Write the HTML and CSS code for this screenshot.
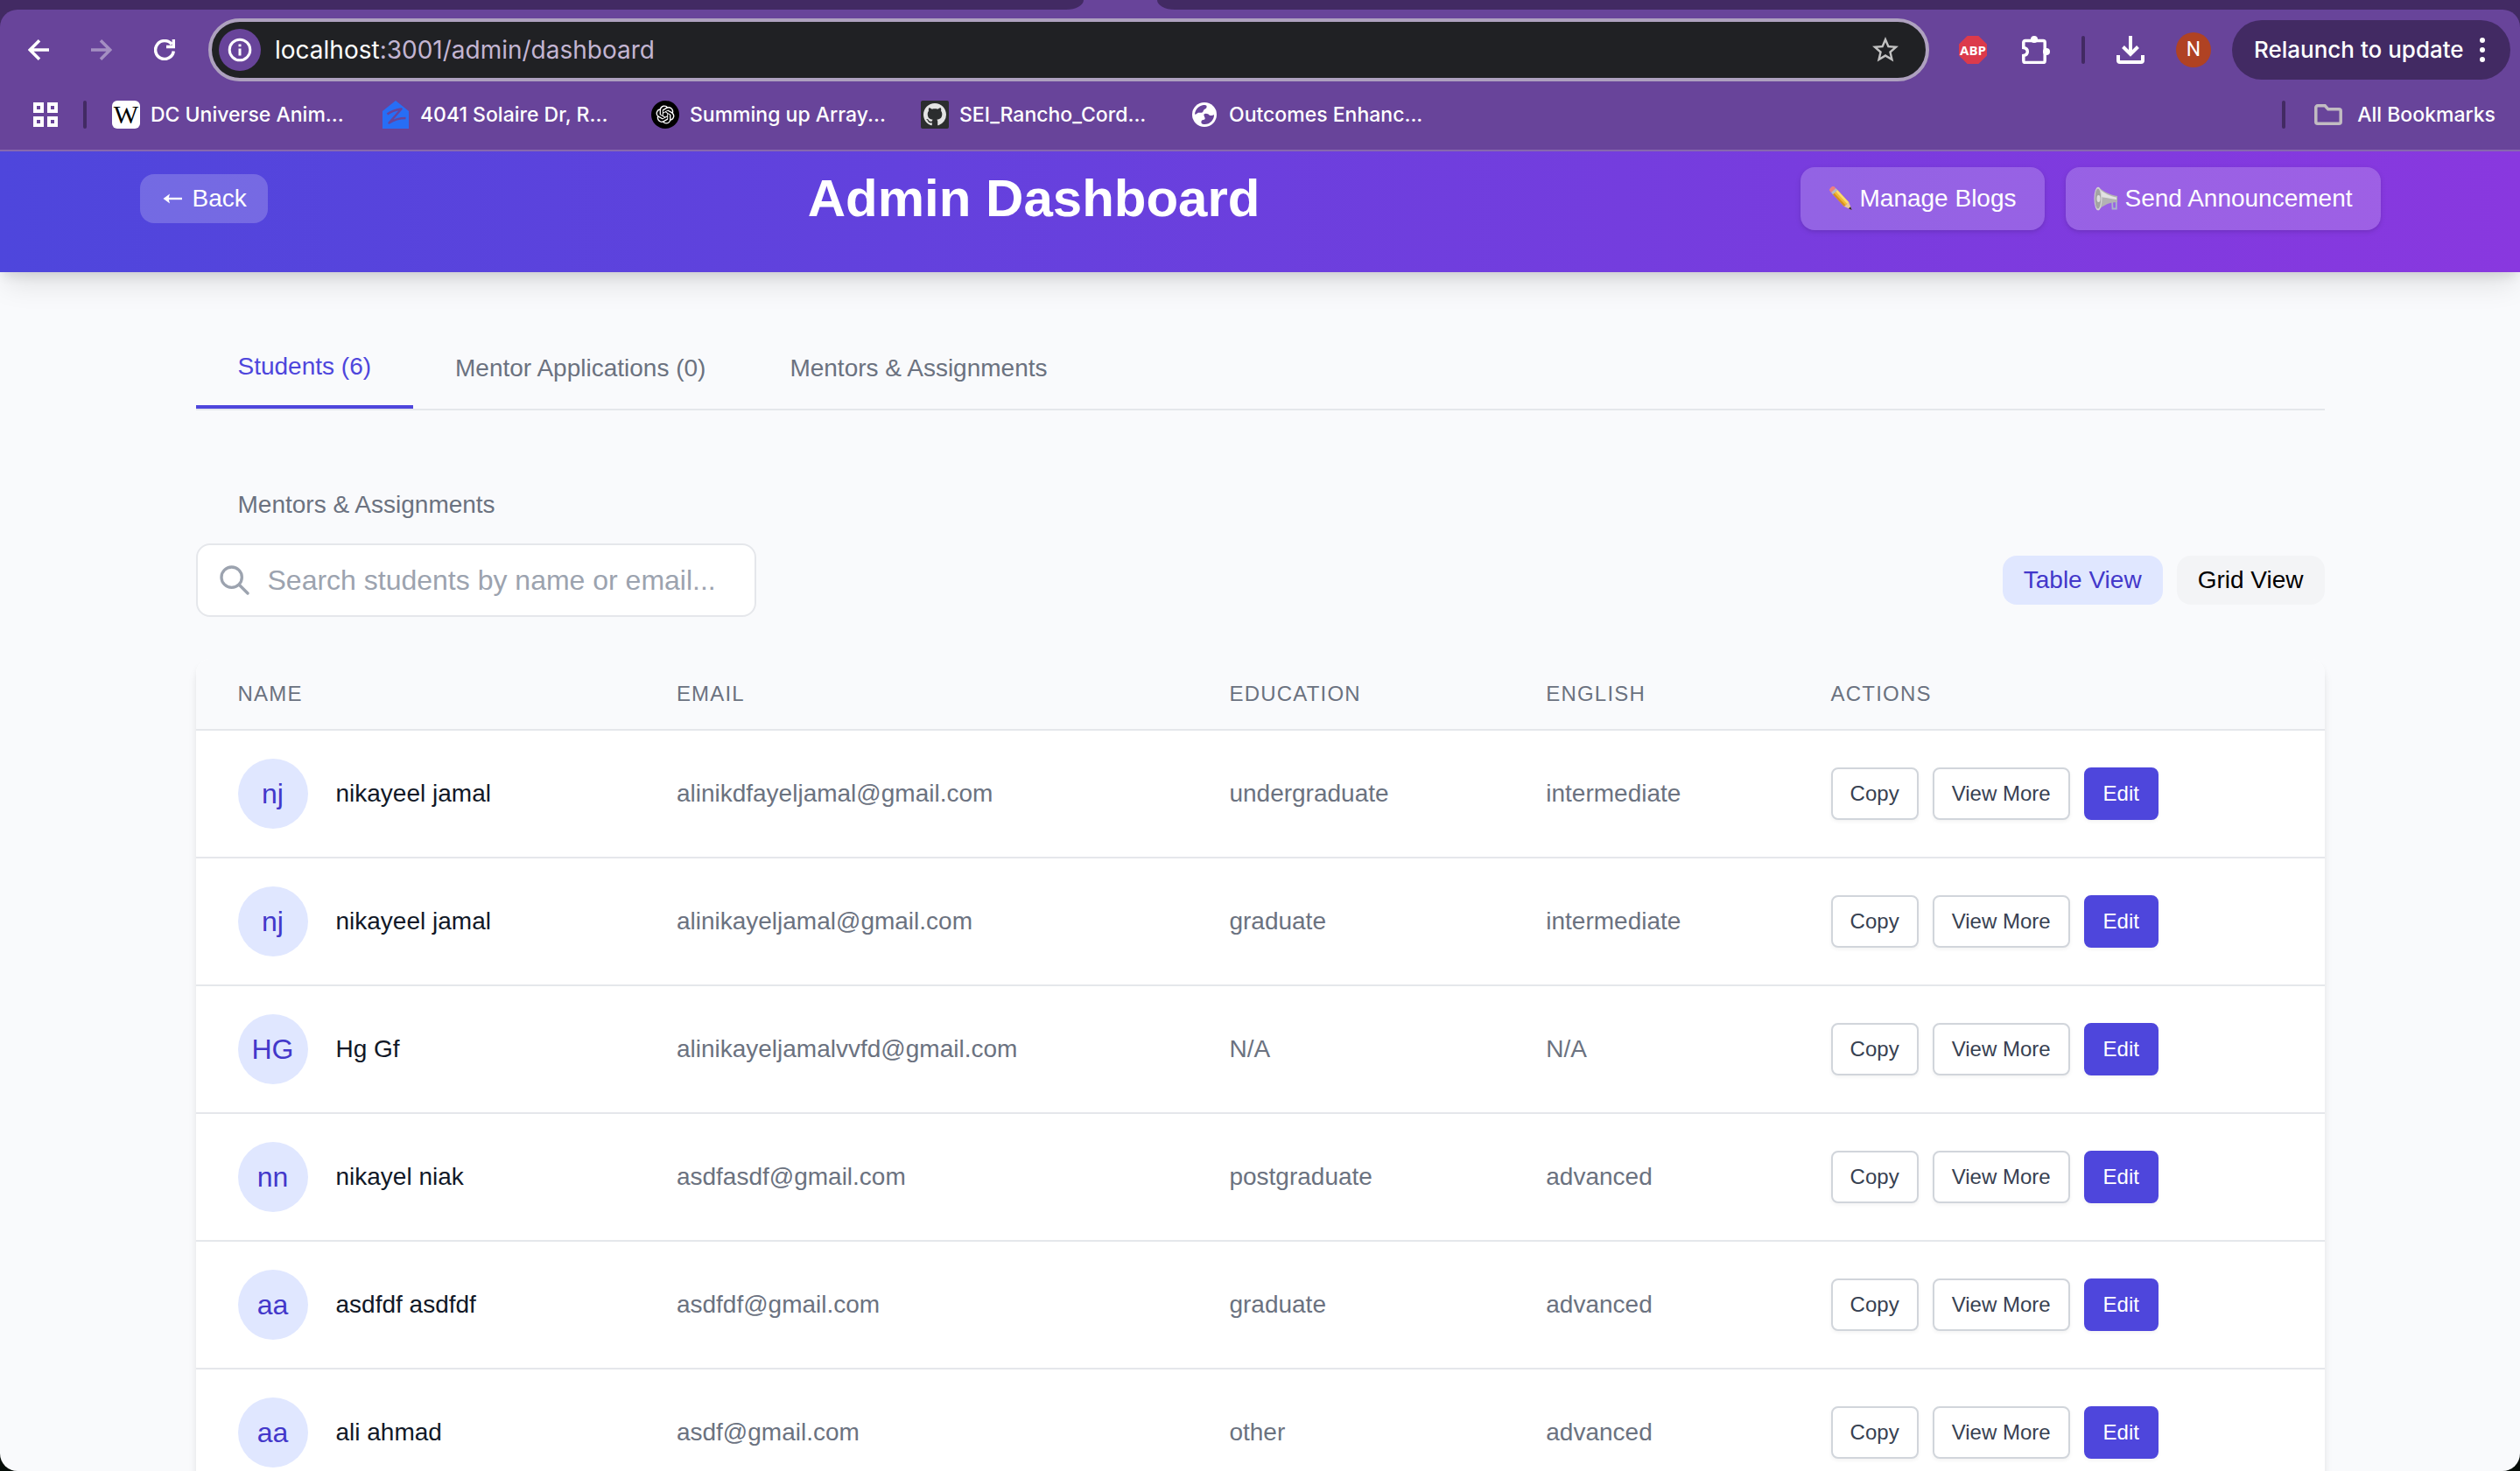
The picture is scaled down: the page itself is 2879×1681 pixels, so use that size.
FILE: index.html
```html
<!DOCTYPE html>
<html lang="en">
<head>
<meta charset="utf-8">
<title>Admin Dashboard</title>
<link rel="stylesheet" href="styles.css">
</head>
<body>
<div class="window">
  <div class="chrome">
    <div class="tab-strip"><div class="tab-strip-left"></div><div class="tab-strip-right"></div></div>
    <div class="toolbar">
      <button class="nav-button" aria-label="Back"><svg width="24" height="24" viewBox="0 0 24 24"><path d="M24 12H3M13 1.3 2.3 12 13 22.7"/></svg></button>
      <button class="nav-button nav-disabled" aria-label="Forward"><svg width="24" height="24" viewBox="0 0 24 24"><path d="M0 12h21M11 1.3 21.7 12 11 22.7"/></svg></button>
      <button class="nav-button" aria-label="Reload"><svg width="24" height="24" viewBox="0 0 24 24"><path d="M22.3 13.5A10.4 10.4 0 1 1 20.2 5.6M22.4 0v8.4H14"/></svg></button>
      <div class="omnibox">
        <button class="site-info" aria-label="Site information"><svg width="28" height="28" viewBox="0 0 28 28"><circle cx="14" cy="14" r="11.8"/><path d="M14 12.5v8M14 7.5v2.8"/></svg></button>
        <span class="url"><b>localhost</b>:3001/admin/dashboard</span>
        <button class="star" aria-label="Bookmark this tab"><svg width="36" height="36" viewBox="0 0 24 24"><path d="M22 9.24l-7.19-.62L12 2 9.19 8.63 2 9.24l5.46 4.73L5.82 21 12 17.27 18.18 21l-1.63-7.03L22 9.24zM12 15.4l-3.76 2.27 1-4.28-3.32-2.88 4.38-.38L12 6.1l1.71 4.04 4.38.38-3.32 2.88 1 4.28L12 15.4z"/></svg></button>
      </div>
      <div class="extensions">
        <button class="abp">ABP</button>
        <button class="icon-button" aria-label="Extensions"><svg width="32" height="32" viewBox="0 0 32 32"><path d="M1.8 13.5v-6a2 2 0 0 1 2-2h20.4a2 2 0 0 1 2 2v21a2 2 0 0 1-2 2H3.8a2 2 0 0 1-2-2v-6c6-1 6-8 0-9z" fill="none" stroke="#fff" stroke-width="3.5"/><circle cx="14" cy="4" r="4" fill="#fff"/><circle cx="28" cy="18" r="4" fill="#fff"/></svg></button>
        <span class="divider"></span>
        <button class="icon-button" aria-label="Downloads"><svg width="32" height="32" viewBox="0 0 32 32" fill="none" stroke="#fff" stroke-width="4"><path d="M16 0v20M7.5 12.5 16 21l8.5-8.5"/><path d="M2 22v6a2 2 0 0 0 2 2h24a2 2 0 0 0 2-2v-6"/></svg></button>
        <button class="profile">N</button>
      </div>
      <button class="relaunch">Relaunch to update<svg width="6" height="28" viewBox="0 0 6 28"><circle cx="3" cy="3" r="3"/><circle cx="3" cy="14" r="3"/><circle cx="3" cy="25" r="3"/></svg></button>
    </div>
    <nav class="bookmarks">
      <button class="apps" aria-label="Apps"><svg width="28" height="28" viewBox="0 0 28 28"><path d="M2 2h8v8H2zM18 2h8v8h-8zM2 18h8v8H2zM18 18h8v8h-8z"/></svg></button>
      <span class="divider"></span>
      <div class="bookmark-list">
        <a class="bookmark" href="#"><span class="wiki">W</span>DC Universe Anim...</a>
        <a class="bookmark" href="#"><svg width="32" height="32" viewBox="0 0 32 32"><path d="M16 0 1 12v20h30V12z" fill="#276ef5"/><path d="M6.5 15.500c5-4 10-5 16-6L8.500 25.500c6-4 12-5.500 19-5.500" fill="none" stroke="#68449a" stroke-width="2.500" stroke-linejoin="round"/></svg>4041 Solaire Dr, R...</a>
        <a class="bookmark" href="#"><svg width="32" height="32" viewBox="0 0 32 32"><circle cx="16" cy="16" r="16"/><path transform="translate(5.500 5.500) scale(.875)" fill="#fff" d="M22.2819 9.8211a5.9847 5.9847 0 0 0-.5157-4.9108 6.0462 6.0462 0 0 0-6.5098-2.9A6.0651 6.0651 0 0 0 4.9807 4.1818a5.9847 5.9847 0 0 0-3.9977 2.9 6.0462 6.0462 0 0 0 .7427 7.0966 5.98 5.98 0 0 0 .511 4.9107 6.051 6.051 0 0 0 6.5146 2.9001A5.9847 5.9847 0 0 0 13.2599 24a6.0557 6.0557 0 0 0 5.7718-4.2058 5.9894 5.9894 0 0 0 3.9977-2.9001 6.0557 6.0557 0 0 0-.7475-7.0729zm-9.022 12.6081a4.4755 4.4755 0 0 1-2.8764-1.0408l.1419-.0804 4.7783-2.7582a.7948.7948 0 0 0 .3927-.6813v-6.7369l2.02 1.1686a.071.071 0 0 1 .038.052v5.5826a4.504 4.504 0 0 1-4.4945 4.4944zm-9.6607-4.1254a4.4708 4.4708 0 0 1-.5346-3.0137l.142.0852 4.783 2.7582a.7712.7712 0 0 0 .7806 0l5.8428-3.3685v2.3324a.0804.0804 0 0 1-.0332.0615L9.74 19.9502a4.4992 4.4992 0 0 1-6.1408-1.6464zM2.3408 7.8956a4.485 4.485 0 0 1 2.3655-1.9728V11.6a.7664.7664 0 0 0 .3879.6765l5.8144 3.3543-2.0201 1.1685a.0757.0757 0 0 1-.071 0l-4.8303-2.7865A4.504 4.504 0 0 1 2.3408 7.872zm16.5963 3.8558L13.1038 8.364 15.1192 7.2a.0757.0757 0 0 1 .071 0l4.8303 2.7913a4.4944 4.4944 0 0 1-.6765 8.1042v-5.6772a.79.79 0 0 0-.407-.667zm2.0107-3.0231l-.142-.0852-4.7735-2.7818a.7759.7759 0 0 0-.7854 0L9.409 9.2297V6.8974a.0662.0662 0 0 1 .0284-.0615l4.8303-2.7866a4.4992 4.4992 0 0 1 6.6802 4.66zM8.3065 12.863l-2.02-1.1638a.0804.0804 0 0 1-.038-.0567V6.0742a4.4992 4.4992 0 0 1 7.3757-3.4537l-.142.0805L8.704 5.459a.7948.7948 0 0 0-.3927.6813zm1.0976-2.3654l2.602-1.4998 2.6069 1.4998v2.9994l-2.5974 1.4997-2.6067-1.4997Z"/></svg>Summing up Array...</a>
        <a class="bookmark" href="#"><svg width="32" height="32" viewBox="0 0 32 32"><rect width="32" height="32" rx="2" fill="#2b2d2e"/><path transform="translate(3 3) scale(1.625)" fill="#e4e4e4" d="M8 0C3.58 0 0 3.58 0 8c0 3.54 2.29 6.53 5.47 7.59.4.07.55-.17.55-.38 0-.19-.01-.82-.01-1.49-2.01.37-2.53-.49-2.69-.94-.09-.23-.48-.94-.82-1.13-.28-.15-.68-.52-.01-.53.63-.01 1.08.58 1.23.82.72 1.21 1.87.87 2.33.66.07-.52.28-.87.51-1.07-1.78-.2-3.64-.89-3.64-3.95 0-.87.31-1.59.82-2.15-.08-.2-.36-1.02.08-2.12 0 0 .67-.21 2.2.82.64-.18 1.32-.27 2-.27s1.36.09 2 .27c1.53-1.04 2.2-.82 2.2-.82.44 1.1.16 1.92.08 2.12.51.56.82 1.27.82 2.15 0 3.07-1.87 3.75-3.65 3.95.29.25.54.73.54 1.48 0 1.07-.01 1.93-.01 2.2 0 .21.15.46.55.38A8.01 8.01 0 0 0 16 8c0-4.42-3.58-8-8-8z"/></svg>SEI_Rancho_Cord...</a>
        <a class="bookmark" href="#"><svg width="32" height="32" viewBox="-2 -2 32 32"><circle cx="14" cy="14" r="14" fill="#fff"/><path fill="#68449a" d="M3 13.500C3.500 8 7.500 3.800 13 3c2 0 3 .4 3.500 1 .5 2-.5 3-2.500 4-1.500 1-1 2.500-2.500 3.500-2 1-4-.5-5 .5S4 14 3 13.500zM13.500 13.500c2-1.500 5-.5 6 1 1.500 1 4 .5 5.500-.5.2 6-4.500 11-10.500 11-2 0-3.500-.5-4-1.500-.5-2 .5-3.500 2-3.500 2 0 2.500-1 2-2.500s-1.500-2.500-1-4z"/></svg>Outcomes Enhanc...</a>
      </div>
      <span class="divider"></span>
      <a class="all-bookmarks" href="#"><svg width="32" height="24" viewBox="0 0 32 24"><path d="M1.8 3.8a2 2 0 0 1 2-2h8.400l3.600 4h12.400a2 2 0 0 1 2 2v12.400a2 2 0 0 1-2 2H3.800a2 2 0 0 1-2-2z"/></svg>All Bookmarks</a>
    </nav>
  </div>

  <div class="page">
    <header class="app-header">
      <div class="header-inner">
        <button class="back-button"><svg width="28" height="28" viewBox="0 0 28 28"><path d="M7 14h17" fill="none" stroke="#fff" stroke-width="2.400"/><path d="M2.500 14 10 8.500 8.500 14l1.500 5.500z" fill="#fff"/></svg>Back</button>
        <h1>Admin Dashboard</h1>
        <div class="header-actions">
          <button class="header-button"><svg width="28" height="28" viewBox="0 0 28 28"><g transform="translate(14.500 14) rotate(47)"><path d="M-11-3.600H9v7.200h-20z" fill="#f3b936"/><path d="M-11-3.600H9v2.600h-20z" fill="#fbdc6c"/><path d="M-11 1.500H9v2.100h-20z" fill="#d48e22"/><path d="M9-3.600 17.500 0 9 3.600z" fill="#ecc798"/><path d="M14-1.500 17.800 0 14 1.500z" fill="#2d2723"/><path d="M-13.500-3.600h3.500v7.200h-3.500z" fill="#b4bac2"/><path d="M-13-3.600h-1.500a2.800 2.800 0 0 0-2.800 2.800v1.600a2.800 2.800 0 0 0 2.800 2.800h1.500z" fill="#ee8080"/></g></svg>Manage Blogs</button>
          <button class="header-button"><svg width="28" height="28" viewBox="0 0 28 28"><path d="M21 14h4.800v11.500h-4.300z" fill="none" stroke="#a9b5cc" stroke-width="1.800"/><path d="M5 .8C12 6.500 19 10 27 11v7C19 18 11 21 5 27.500z" fill="#b3b3b3"/><path d="M6 2.500c6 5.500 13 9 20 10V15C19 14 12 12.500 6 12z" fill="#e2e2e2"/><ellipse cx="5" cy="14" rx="4.500" ry="13.300" fill="#d4d4d4"/><ellipse cx="4.800" cy="14" rx="3.400" ry="11.500" fill="#a3a3a3"/><ellipse cx="5.500" cy="14" rx="2" ry="4" fill="#dedede"/></svg>Send Announcement</button>
        </div>
      </div>
    </header>

    <main class="content">
      <div class="tabs">
        <button class="tab tab-active">Students (6)</button>
        <button class="tab">Mentor Applications (0)</button>
        <button class="tab">Mentors &amp; Assignments</button>
      </div>
      <button class="tab">Mentors &amp; Assignments</button>
      <div class="controls">
        <div class="search">
          <svg width="40" height="40" viewBox="0 0 24 24"><path d="M21 21l-6-6m2-5a7 7 0 11-14 0 7 7 0 0114 0z"/></svg>
          <input type="text" placeholder="Search students by name or email..." aria-label="Search students">
        </div>
        <div class="view-toggle">
          <button class="view-button view-active">Table View</button>
          <button class="view-button">Grid View</button>
        </div>
      </div>

      <div class="card">
        <table>
          <thead>
            <tr><th>Name</th><th>Email</th><th>Education</th><th>English</th><th>Actions</th></tr>
          </thead>
          <tbody>
            <tr>
              <td><div class="person"><span class="avatar">nj</span>nikayeel jamal</div></td>
              <td>alinikdfayeljamal@gmail.com</td><td>undergraduate</td><td>intermediate</td>
              <td><div class="actions"><button class="action">Copy</button><button class="action">View More</button><button class="action action-primary">Edit</button></div></td>
            </tr>
            <tr>
              <td><div class="person"><span class="avatar">nj</span>nikayeel jamal</div></td>
              <td>alinikayeljamal@gmail.com</td><td>graduate</td><td>intermediate</td>
              <td><div class="actions"><button class="action">Copy</button><button class="action">View More</button><button class="action action-primary">Edit</button></div></td>
            </tr>
            <tr>
              <td><div class="person"><span class="avatar">HG</span>Hg Gf</div></td>
              <td>alinikayeljamalvvfd@gmail.com</td><td>N/A</td><td>N/A</td>
              <td><div class="actions"><button class="action">Copy</button><button class="action">View More</button><button class="action action-primary">Edit</button></div></td>
            </tr>
            <tr>
              <td><div class="person"><span class="avatar">nn</span>nikayel niak</div></td>
              <td>asdfasdf@gmail.com</td><td>postgraduate</td><td>advanced</td>
              <td><div class="actions"><button class="action">Copy</button><button class="action">View More</button><button class="action action-primary">Edit</button></div></td>
            </tr>
            <tr>
              <td><div class="person"><span class="avatar">aa</span>asdfdf asdfdf</div></td>
              <td>asdfdf@gmail.com</td><td>graduate</td><td>advanced</td>
              <td><div class="actions"><button class="action">Copy</button><button class="action">View More</button><button class="action action-primary">Edit</button></div></td>
            </tr>
            <tr>
              <td><div class="person"><span class="avatar">aa</span>ali ahmad</div></td>
              <td>asdf@gmail.com</td><td>other</td><td>advanced</td>
              <td><div class="actions"><button class="action">Copy</button><button class="action">View More</button><button class="action action-primary">Edit</button></div></td>
            </tr>
          </tbody>
        </table>
      </div>
    </main>
  </div>
</div>
</body>
</html>
```
FILE: styles.css
```css
* { box-sizing: border-box; }
body { margin: 0; background: #060d08; }
button, input { font: inherit; color: inherit; }
button { padding: 0; border: 0; background: none; cursor: pointer; white-space: nowrap; }
a { color: inherit; text-decoration: none; }
svg { display: block; flex: none; }

.window {
  display: flex;
  flex-direction: column;
  height: 100vh;
  overflow: hidden;
  border-radius: 0 0 20px 20px;
  background: #f9fafc;
}

/* Browser chrome */
.chrome {
  flex: none;
  background: #422a63;
  color: #fff;
  font-family: Inter, sans-serif;
  font-weight: 500;
  font-size: 23px;
  line-height: 32px;
}
.tab-strip { display: flex; gap: 84px; height: 11px; background: #68449a; }
.tab-strip-left { width: 43%; background: #422a63; border-bottom-right-radius: 20px 11px; }
.tab-strip-right { flex: 1; background: #422a63; border-bottom-left-radius: 20px 11px; }
.toolbar {
  display: flex;
  align-items: center;
  gap: 16px;
  padding: 10px 11px 10px 16px;
  background: #68449a;
  border-radius: 20px 20px 0 0;
}
.nav-button { display: flex; justify-content: center; align-items: center; width: 56px; height: 56px; }
.nav-button svg { fill: none; stroke: #fff; stroke-width: 3.5; }
.nav-disabled { opacity: .4; }
.omnibox {
  display: flex;
  flex: 1;
  align-items: center;
  gap: 16px;
  height: 72px;
  margin: 0 18px 0 6px;
  padding: 0 28px 0 8px;
  border: 4px solid #aea1bf;
  border-radius: 36px;
  background: #202124;
}
.site-info {
  display: flex;
  justify-content: center;
  align-items: center;
  width: 48px;
  height: 48px;
  border-radius: 50%;
  background: #68449a;
}
.site-info svg { fill: none; stroke: #fff; stroke-width: 3; }
.url { flex: 1; font-size: 28px; font-weight: 400; color: #c3b5d2; }
.url b { font-weight: 400; color: #fff; }
.star svg { fill: #c2c2c2; }
.extensions { display: flex; align-items: center; gap: 36px; margin-right: 8px; }
.abp {
  width: 32px;
  height: 32px;
  margin-right: 4px;
  background: #dc3a4b;
  clip-path: polygon(30% 0, 70% 0, 100% 30%, 100% 70%, 70% 100%, 30% 100%, 0 70%, 0 30%);
  font-family: "Open Sans", sans-serif;
  font-size: 15px;
  font-weight: 700;
}
.profile {
  width: 40px;
  height: 40px;
  border-radius: 50%;
  background: #b04223;
  font-family: Roboto, sans-serif;
  font-size: 23px;
  font-weight: 400;
}
.divider { flex: none; width: 4px; height: 32px; border-radius: 2px; background: #422a63; }
.relaunch {
  display: flex;
  align-items: center;
  justify-content: space-between;
  width: 318px;
  height: 68px;
  padding: 0 29px 0 25px;
  border-radius: 34px;
  background: #422a63;
  font-size: 26px;
}
.relaunch svg { fill: #fff; }
.bookmarks {
  display: flex;
  align-items: center;
  height: 70px;
  gap: 29px;
  padding: 0 28px 12px 38px;
  border-bottom: 2px solid #8768ae;
  background: #68449a;
}
.apps svg { fill: none; stroke: #fff; stroke-width: 4; }
.bookmark-list { display: flex; flex: 1; gap: 40px; }
.bookmark { display: flex; align-items: center; gap: 12px; width: 268px; white-space: nowrap; }
.wiki {
  display: flex;
  flex: none;
  justify-content: center;
  width: 32px;
  height: 32px;
  border-radius: 6px;
  background: #fff;
  color: #000;
  font-family: "Liberation Serif", serif;
  font-size: 30px;
}
.all-bookmarks { display: flex; align-items: center; gap: 17px; margin-left: 4px; }
.all-bookmarks svg { fill: none; stroke: #c2bcc2; stroke-width: 3.5; }

/* Dashboard */
.page {
  flex: 1;
  min-height: 0;
  overflow: hidden;
  font-family: "Liberation Sans", Arial, sans-serif;
  font-size: 28px;
  line-height: 40px;
}
.app-header {
  padding: 18px 0 48px;
  background: linear-gradient(90deg, #4e46dc, #8938df);
  color: #fff;
  box-shadow: 0 20px 30px -6px rgba(0, 0, 0, .1), 0 8px 12px -4px rgba(0, 0, 0, .1);
}
.header-inner {
  display: flex;
  align-items: center;
  justify-content: space-between;
  max-width: 2560px;
  margin: 0 auto;
}
.header-inner h1 { margin: 0; font-size: 60px; line-height: 72px; font-weight: 700; }
.back-button {
  display: flex;
  align-items: center;
  gap: 8px;
  padding: 8px 24px;
  border-radius: 16px;
  background: rgba(255, 255, 255, .2);
}
.header-actions { display: flex; gap: 24px; }
.header-button {
  display: flex;
  align-items: center;
  gap: 8px;
  padding: 16px 32px;
  border-radius: 16px;
  background: rgba(255, 255, 255, .2);
  box-shadow: 0 2px 6px rgba(0, 0, 0, .1), 0 2px 4px -2px rgba(0, 0, 0, .1);
}
.content { max-width: 2432px; margin: 0 auto; padding: 64px 0; }
.tabs { display: flex; margin-bottom: 64px; border-bottom: 2px solid #e5e7eb; }
.tab { display: block; padding: 24px 48px; color: #6b7280; }
.tab-active { border-bottom: 4px solid #4e46dc; color: #4e46dc; }
.controls { display: flex; align-items: center; justify-content: space-between; margin-bottom: 48px; }
.search {
  display: flex;
  align-items: center;
  gap: 18px;
  width: 640px;
  height: 84px;
  padding: 0 22px;
  border: 2px solid #e5e7eb;
  border-radius: 16px;
  background: #fff;
}
.search svg { fill: none; stroke: #9ca3af; stroke-width: 2; stroke-linecap: round; stroke-linejoin: round; }
.search input { flex: 1; min-width: 0; padding: 0; border: 0; outline: 0; background: none; font-size: 32px; }
.search input::placeholder { color: #9ca3af; opacity: 1; }
.view-toggle { display: flex; gap: 16px; }
.view-button { padding: 8px 24px; border-radius: 16px; background: #f3f4f6; color: #000; }
.view-active { background: #e0e7ff; color: #4338ca; }
.card {
  overflow: hidden;
  border-radius: 16px;
  background: #fff;
  box-shadow: 0 8px 12px -2px rgba(0, 0, 0, .1), 0 4px 8px -4px rgba(0, 0, 0, .1);
}
table { width: 100%; border-spacing: 0; }
th {
  padding: 24px 48px;
  background: #f9fafc;
  color: #6b7280;
  font-size: 24px;
  line-height: 32px;
  font-weight: 400;
  letter-spacing: .05em;
  text-align: left;
  text-transform: uppercase;
}
td { padding: 32px 48px; border-top: 2px solid #e5e7eb; color: #6b7280; white-space: nowrap; }
.person { display: flex; align-items: center; gap: 32px; color: #111827; }
.avatar {
  display: flex;
  align-items: center;
  justify-content: center;
  width: 80px;
  height: 80px;
  border-radius: 50%;
  background: #e0e7ff;
  color: #4338ca;
  font-size: 32px;
}
.actions { display: flex; gap: 16px; }
.action {
  padding: 12px 20px;
  border: 2px solid #d1d5db;
  border-radius: 8px;
  background: #fff;
  color: #374151;
  font-size: 24px;
  line-height: 32px;
  box-shadow: 0 2px 4px rgba(0, 0, 0, .05);
}
.action-primary { border-color: #4e46dc; background: #4e46dc; color: #fff; }
```
